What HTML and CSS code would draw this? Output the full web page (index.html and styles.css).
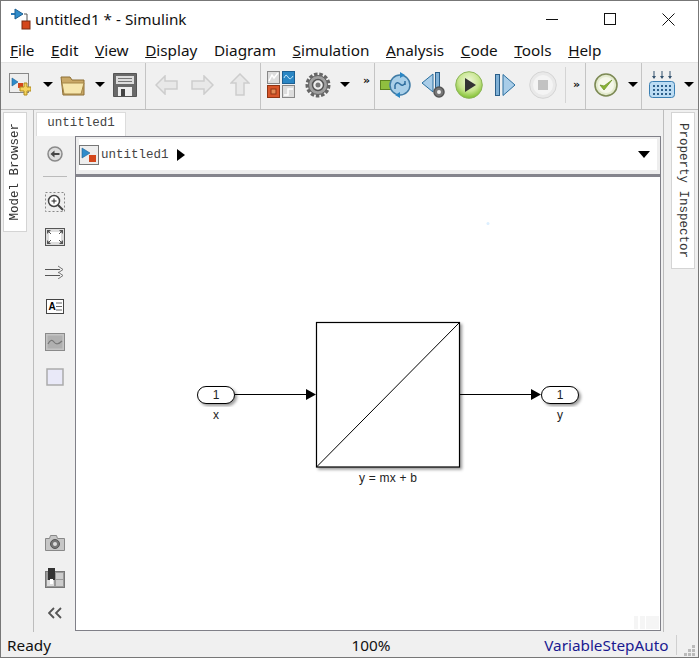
FILE: index.html
```html
<!DOCTYPE html>
<html lang="en">
<head>
    <meta charset="UTF-8">
    <title>untitled1 * - Simulink</title>
    <link rel="stylesheet" href="styles.css">
</head>
<body>
<div class="window">
    <!-- Title bar -->
    <header class="titlebar">
        <svg class="app-icon" width="21" height="22" viewBox="0 0 21 22">
            <path d="M1 6h4" stroke="#2a79b8" stroke-width="2"/>
            <path d="M5 1l8 5-8 5z" fill="#2f8ccb" stroke="#1d5f92"/>
            <path d="M14 6h3v7" fill="none" stroke="#555"/>
            <rect x="12" y="13" width="8" height="8" fill="#d4471c" stroke="#7a2b10"/>
        </svg>
        <span class="title">untitled1 * - Simulink</span>
        <div class="win-controls">
            <svg width="13" height="13" viewBox="0 0 13 13"><path d="M0 6.500h12" stroke="#111"/></svg>
            <svg width="13" height="13" viewBox="0 0 13 13"><rect x="0.500" y="0.500" width="11" height="11" fill="none" stroke="#111"/></svg>
            <svg width="13" height="13" viewBox="0 0 13 13"><path d="M0.500 0.500l12 12M12.500 0.500l-12 12" stroke="#111"/></svg>
        </div>
    </header>

    <!-- Menu -->
    <nav class="menubar">
        <span><u>F</u>ile</span>
        <span><u>E</u>dit</span>
        <span><u>V</u>iew</span>
        <span><u>D</u>isplay</span>
        <span>Dia<u>g</u>ram</span>
        <span><u>S</u>imulation</span>
        <span><u>A</u>nalysis</span>
        <span><u>C</u>ode</span>
        <span><u>T</u>ools</span>
        <span><u>H</u>elp</span>
    </nav>

    <!-- Toolbar -->
    <div class="toolbar">
        <div class="tool-group group-file">
            <svg width="22" height="25" viewBox="0 0 22 25">
                <rect x="0.500" y="1.500" width="19" height="19" fill="#eee" stroke="#888"/>
                <path d="M3 6l6 4-6 4z" fill="#2f8ccb" stroke="#1d5f92" stroke-width="0.600"/>
                <rect x="9" y="11" width="5" height="5" fill="#d4471c"/>
                <path d="M15 11h3v4h4v4h-4v4h-3v-4h-4v-4h4z" fill="#f4d35e" stroke="#b08a1d"/>
            </svg>
            <span class="caret gap-12"></span>
            <svg class="gap-7" width="26" height="22" viewBox="0 0 26 22">
                <path d="M1 3h9l2 3h12v15H3z" fill="#c9a867" stroke="#8d6f35"/>
                <path d="M2 9h22l-3 11H4z" fill="#f6e6ad" stroke="#a58748"/>
            </svg>
            <span class="caret gap-9"></span>
            <svg class="gap-8" width="24" height="24" viewBox="0 0 24 24">
                <path d="M0.500 0.500h23v23h-23z" fill="#6a6a6a" stroke="#555"/>
                <rect x="3" y="3" width="18" height="8" fill="#ddd"/>
                <path d="M5 5.500h14M5 8.500h14" stroke="#777"/>
                <rect x="5" y="14" width="14" height="9" fill="#eee"/>
                <rect x="8" y="16" width="4" height="7" fill="#444"/>
            </svg>
        </div>
        <div class="tool-group group-nav">
            <svg width="23" height="20" viewBox="0 0 23 20"><path d="M1 10l9-9v5h12v8H10v5z" fill="#e8e8e8" stroke="#cdcdcd" stroke-width="1.500"/></svg>
            <svg class="gap-13" width="23" height="20" viewBox="0 0 23 20"><path d="M22 10l-9-9v5H1v8h12v5z" fill="#e8e8e8" stroke="#cdcdcd" stroke-width="1.500"/></svg>
            <svg class="gap-16" width="20" height="23" viewBox="0 0 20 23"><path d="M10 1l9 9h-5v12H6V10H1z" fill="#e8e8e8" stroke="#cdcdcd" stroke-width="1.500"/></svg>
        </div>
        <div class="tool-group group-lib">
            <svg width="29" height="27" viewBox="0 0 29 27">
                <rect x="0.500" y="0.500" width="12" height="12" fill="#ddd" stroke="#888"/>
                <path d="M2 10l3-6 2 3 4-5" fill="none" stroke="#fff" stroke-width="1.500"/>
                <rect x="15.500" y="0.500" width="12" height="12" fill="#2a86c4" stroke="#1d5f92"/>
                <path d="M17 7q2-5 4-1t5-1" fill="none" stroke="#bfe3f7"/>
                <rect x="0.500" y="14.500" width="12" height="12" fill="#d8562a" stroke="#8f3413"/>
                <rect x="4" y="18" width="5" height="5" fill="#e58a55" stroke="#8f3413"/>
                <rect x="15.500" y="14.500" width="12" height="12" fill="#ddd" stroke="#888"/>
                <path d="M17 24h4v-6h5" fill="none" stroke="#fff" stroke-width="1.500"/>
            </svg>
            <svg class="gap-9" width="26" height="26" viewBox="0 0 26 26">
                <circle cx="13" cy="13" r="10" fill="#888" stroke="#666" stroke-width="5" stroke-dasharray="3.200 1.600"/>
                <circle cx="13" cy="13" r="9.500" fill="#a0a0a0" stroke="#666"/>
                <circle cx="13" cy="13" r="5.500" fill="#eee" stroke="#555" stroke-width="1.500"/>
                <circle cx="13" cy="13" r="2.500" fill="#777"/>
            </svg>
            <span class="caret gap-9"></span>
            <span class="more gap-13">»</span>
        </div>
        <div class="tool-group group-run">
            <svg width="31" height="26" viewBox="0 0 31 26">
                <rect x="0.500" y="8.500" width="11" height="9" fill="#8fbf3f" stroke="#5d8420"/>
                <circle cx="20" cy="13" r="10" fill="#a9cfe8" stroke="#3f7ba6" stroke-width="1.500"/>
                <path d="M15 13q2-4 5-1t5-1M25 9v4M15 17l0-4" fill="none" stroke="#2f6f9f" stroke-width="1.500"/>
                <path d="M20 0l5 3-5 3zM20 20l-5 3 5 3z" fill="#2a86c4"/>
            </svg>
            <svg class="gap-10" width="25" height="27" viewBox="0 0 25 27">
                <path d="M12 3v18L1 12z" fill="#a9cde8" stroke="#2a6f9f"/>
                <rect x="14.500" y="1.500" width="4" height="18" fill="#7fb0d6" stroke="#2a5f8a"/>
                <circle cx="18" cy="21" r="5" fill="#777" stroke="#555" stroke-width="1.500"/>
                <circle cx="18" cy="21" r="2" fill="#eee"/>
            </svg>
            <svg class="gap-9" width="28" height="28" viewBox="0 0 28 28">
                <defs>
                    <radialGradient id="playFill" cx="50%" cy="35%" r="65%">
                        <stop offset="0" stop-color="#eef7d8"/>
                        <stop offset="0.600" stop-color="#c7e58e"/>
                        <stop offset="1" stop-color="#7fbf2e"/>
                    </radialGradient>
                </defs>
                <circle cx="14" cy="14" r="13.300" fill="url(#playFill)" stroke="#8cb558"/>
                <path d="M10 7l11 7-11 7z" fill="#333"/>
            </svg>
            <svg class="gap-12" width="21" height="24" viewBox="0 0 21 24">
                <rect x="0.500" y="1.500" width="4" height="21" fill="#7fb0d6" stroke="#2a5f8a"/>
                <path d="M8 1.500v21L20 12z" fill="#a9cde8" stroke="#2a6f9f"/>
            </svg>
            <svg class="gap-13" width="28" height="28" viewBox="0 0 28 28">
                <circle cx="14" cy="14" r="13.300" fill="#e9e9e9" stroke="#d4d4d4"/>
                <circle cx="14" cy="14" r="10" fill="#f4f4f4"/>
                <rect x="9" y="9" width="10" height="10" fill="#c2c2c2"/>
            </svg>
            <span class="thin-sep"></span>
            <span class="more more-low gap-7">»</span>
        </div>
        <div class="tool-group group-check">
            <svg width="24" height="24" viewBox="0 0 24 24">
                <circle cx="12" cy="12" r="11" fill="#e4ebcf" stroke="#7d8a55" stroke-width="1.600"/>
                <circle cx="12" cy="12" r="8" fill="#f5f7ea"/>
                <path d="M6 12l4 5 8-10-8 6z" fill="#8ab534" stroke="#6f9428" stroke-width="0.800"/>
            </svg>
            <span class="caret gap-10"></span>
        </div>
        <div class="tool-group group-grid">
            <svg width="26" height="27" viewBox="0 0 26 27">
                <path d="M5 0v7M13 0v7M21 0v7" stroke="#35536f"/>
                <path d="M3 5l2 3 2-3zM11 5l2 3 2-3zM19 5l2 3 2-3z" fill="#35536f"/>
                <rect x="0.500" y="10.500" width="25" height="16" rx="3" fill="#bcdcf3" stroke="#3a7fb3"/>
                <path d="M4 15h2M8 15h2M12 15h2M16 15h2M20 15h2M4 19h2M8 19h2M12 19h2M16 19h2M20 19h2M4 23h2M8 23h2M12 23h2M16 23h2M20 23h2" stroke="#2d5f8a" stroke-width="2"/>
            </svg>
            <span class="caret gap-9"></span>
        </div>
    </div>

    <!-- Workspace -->
    <div class="workspace">
        <aside class="rail-left">
            <div class="side-tab browser-tab"><span>Model Browser</span></div>
        </aside>

        <div class="center">
            <div class="tabstrip"><div class="doc-tab">untitled1</div></div>
            <div class="center-row">
                <div class="tools">
                    <div class="tool"><svg width="16" height="16" viewBox="0 0 16 16">
                        <circle cx="8" cy="8" r="7" fill="#ddd" stroke="#8a8a8a" stroke-width="1.500"/>
                        <path d="M3.500 8l4-3.500V7h5v2h-5v2.500z" fill="#444"/>
                    </svg></div>
                    <div class="tool-sep"></div>
                    <div class="tool"><svg width="20" height="20" viewBox="0 0 20 20">
                        <rect x="0.500" y="0.500" width="19" height="19" fill="#eee" stroke="#888" stroke-dasharray="2 2"/>
                        <circle cx="9" cy="9" r="5.500" fill="#fff" stroke="#444" stroke-width="1.500"/>
                        <path d="M6.500 9h5M9 6.500v5" stroke="#222"/>
                        <path d="M13 13l5 5" stroke="#444" stroke-width="2"/>
                    </svg></div>
                    <div class="tool"><svg width="20" height="18" viewBox="0 0 20 18">
                        <rect x="0.500" y="0.500" width="19" height="17" fill="#ddd" stroke="#555"/>
                        <rect x="4" y="4" width="12" height="10" fill="#fff"/>
                        <path d="M2 2h4L2 6zM18 2h-4l4 4zM2 16h4l-4-4zM18 16h-4l4-4z" fill="#555"/>
                        <path d="M6 6L3 3M14 6l3-3M6 12l-3 3M14 12l3 3" stroke="#555"/>
                    </svg></div>
                    <div class="tool"><svg width="19" height="14" viewBox="0 0 19 14">
                        <path d="M0 4.500h15M0 10.500h15" stroke="#555" stroke-width="1.200"/>
                        <path d="M13 1l5 3.500-5 3.500M13 7l5 3.500-5 3.500" fill="none" stroke="#777"/>
                    </svg></div>
                    <div class="tool"><svg width="18" height="15" viewBox="0 0 18 15">
                        <rect x="0.500" y="0.500" width="17" height="14" fill="#fff" stroke="#444"/>
                        <text class="ae-text" x="2.500" y="11">A</text>
                        <path d="M10 4h6M10 7.500h6M10 11h6" stroke="#666"/>
                    </svg></div>
                    <div class="tool"><svg width="20" height="18" viewBox="0 0 20 18">
                        <rect x="0.500" y="0.500" width="19" height="17" fill="#c4c4c4" stroke="#8a8a8a"/>
                        <rect x="2.500" y="2.500" width="15" height="13" fill="#b0b0b0"/>
                        <path d="M3 11q3-6 6-2t8-1" fill="none" stroke="#777" stroke-width="1.200"/>
                    </svg></div>
                    <div class="tool"><svg width="18" height="18" viewBox="0 0 18 18">
                        <rect x="1" y="1" width="16" height="16" fill="#e9e9f8" stroke="#aaa" stroke-width="1.500"/>
                    </svg></div>
                    <div class="tools-spacer"></div>
                    <div class="tool"><svg width="20" height="16" viewBox="0 0 20 16">
                        <path d="M0.500 3.500h4l1-3h6l1 3h7v12h-19z" fill="#c6c6c6" stroke="#888"/>
                        <circle cx="10" cy="9" r="4.500" fill="#777" stroke="#555"/>
                        <circle cx="10" cy="9" r="2" fill="#ddd"/>
                    </svg></div>
                    <div class="tool"><svg width="20" height="20" viewBox="0 0 20 20">
                        <rect x="0.500" y="3.500" width="19" height="16" fill="#999" stroke="#777"/>
                        <rect x="11" y="5" width="7" height="6" fill="#ccc"/>
                        <rect x="11" y="12" width="7" height="6" fill="#ccc"/>
                        <rect x="2" y="12" width="7" height="6" fill="#ddd"/>
                        <rect x="3" y="0" width="7" height="12" fill="#333"/>
                        <rect x="5" y="11" width="3" height="5" fill="#fff"/>
                    </svg></div>
                    <div class="tool"><svg width="14" height="12" viewBox="0 0 14 12">
                        <path d="M6 1L1 6l5 5M13 1L8 6l5 5" fill="none" stroke="#555" stroke-width="1.800"/>
                    </svg></div>
                </div>

                <div class="editor">
                    <div class="breadcrumb">
                        <div class="crumb-inner">
                            <svg class="crumb-icon" width="20" height="20" viewBox="0 0 20 20">
                                <rect x="0.500" y="0.500" width="19" height="19" fill="#eee" stroke="#777"/>
                                <path d="M3 3l8 5-8 5z" fill="#2f8ccb" stroke="#1d5f92" stroke-width="0.600"/>
                                <rect x="10" y="10" width="7" height="7" fill="#d4471c"/>
                            </svg>
                            <span class="crumb-name">untitled1</span>
                            <span class="crumb-arrow"></span>
                            <span class="crumb-drop"></span>
                        </div>
                    </div>
                    <div class="canvas">
                        <svg class="diagram" width="584" height="453" viewBox="76 177 584 453">
                            <defs>
                                <filter id="soft" x="-10%" y="-10%" width="125%" height="130%">
                                    <feDropShadow dx="2" dy="2" stdDeviation="1.500" flood-color="#000" flood-opacity="0.400"/>
                                </filter>
                            </defs>
                            <circle cx="488" cy="223.500" r="1.500" fill="#dcefff"/>

                            <rect class="port" x="197.500" y="386.500" width="37" height="17" rx="8.500"/>
                            <text class="port-num" x="216" y="399">1</text>
                            <text class="label" x="216" y="419">x</text>

                            <path d="M235 394.500h72" stroke="#000"/>
                            <path d="M306 389l10 5.500-10 5.500z" fill="#000"/>

                            <rect class="block" x="316.500" y="322.500" width="143" height="144.500"/>
                            <path d="M316.500 467L459.500 322.500" stroke="#000"/>
                            <text class="label label-wide" x="388" y="482">y = mx + b</text>

                            <path d="M460 394.500h72" stroke="#000"/>
                            <path d="M531 389l10 5.500-10 5.500z" fill="#000"/>

                            <rect class="port" x="541.500" y="386.500" width="37" height="17" rx="8.500"/>
                            <text class="port-num" x="560" y="399">1</text>
                            <text class="label" x="560" y="419">y</text>

                            <rect x="634" y="616" width="4" height="13" fill="#f5f5f5"/>
                            <rect x="640" y="616" width="5" height="13" fill="#f5f5f5"/>
                            <rect x="646" y="616" width="13" height="13" fill="#f5f5f5"/>
                        </svg>
                    </div>
                </div>
            </div>
        </div>

        <aside class="rail-right">
            <div class="side-tab inspector-tab"><span>Property Inspector</span></div>
        </aside>
    </div>

    <!-- Status bar -->
    <footer class="statusbar">
        <span class="st-ready">Ready</span>
        <span class="st-zoom">100%</span>
        <span class="st-solver">VariableStepAuto</span>
        <span class="st-sep"></span>
        <svg class="grip" width="11" height="11" viewBox="0 0 11 11">
            <path d="M8 0h3v3H8zM4 4h3v3H4zM8 4h3v3H8zM0 8h3v3H0zM4 8h3v3H4zM8 8h3v3H8z" fill="#bbb"/>
        </svg>
    </footer>
</div>
</body>
</html>
```

FILE: styles.css
```css
* {
    box-sizing: border-box;
    margin: 0;
    padding: 0;
}

body {
    width: 699px;
    height: 658px;
    overflow: hidden;
    background-color: #fff;
    font-family: "Noto Sans", "Open Sans", sans-serif;
    color: #111;
}

svg {
    display: block;
    flex: none;
}

.window {
    display: flex;
    flex-direction: column;
    width: 699px;
    height: 658px;
    border: 1px solid #777;
    background-color: #f0f0f0;
}

/* Title bar */
.titlebar {
    display: flex;
    align-items: center;
    height: 37px;
    padding: 0 0 1px 9px;
    background-color: #fff;
}

.title {
    margin-left: 4px;
    font-size: 15.3px;
}

.win-controls {
    display: flex;
    gap: 45px;
    margin-left: auto;
    padding-right: 23px;
}

/* Menu */
.menubar {
    display: flex;
    gap: 16.6px;
    align-items: center;
    height: 24px;
    padding-left: 9px;
    background-color: #fff;
    font-size: 15.3px;
}

/* Toolbar */
.toolbar {
    display: flex;
    height: 48px;
    border-top: 1px solid #e4e4e4;
    border-bottom: 1px solid #bdbdbd;
    background-color: #f0f0f0;
}

.tool-group {
    display: flex;
    align-items: center;
    padding-bottom: 3px;
    border-right: 1px solid #c4c4c4;
}

.group-file { width: 145px; padding-left: 8px; }
.group-nav { width: 115px; padding-left: 9px; }
.group-lib { width: 114px; padding-left: 6px; }
.group-run { width: 211px; padding-left: 5px; }
.group-check { width: 56px; padding-left: 8px; }
.group-grid { flex: 1; padding-left: 7px; border-right: 0; }

.gap-7 { margin-left: 7px; }
.gap-8 { margin-left: 8px; }
.gap-9 { margin-left: 9px; }
.gap-10 { margin-left: 10px; }
.gap-12 { margin-left: 12px; }
.gap-13 { margin-left: 13px; }
.gap-16 { margin-left: 16px; }

.caret {
    flex: none;
    width: 0;
    height: 0;
    border-left: 5px solid transparent;
    border-right: 5px solid transparent;
    border-top: 5px solid #000;
}

.more {
    flex: none;
    margin-bottom: 8px;
    font-family: "DejaVu Sans", sans-serif;
    font-size: 11px;
    font-weight: bold;
    line-height: 1;
}

.more-low {
    margin-bottom: 0;
}

.thin-sep {
    flex: none;
    width: 1px;
    height: 36px;
    margin-left: 8px;
    background-color: #d4d4d4;
}

/* Workspace */
.workspace {
    display: flex;
    flex: 1;
    min-height: 0;
}

.rail-left {
    flex: none;
    width: 33px;
    padding: 2px 0 0 2px;
    border-right: 1px solid #bdbdbd;
}

.rail-right {
    flex: none;
    width: 35px;
    padding: 2px 0 0 7px;
    border-left: 1px solid #bdbdbd;
}

.side-tab {
    display: flex;
    align-items: center;
    justify-content: center;
    width: 24px;
    border: 1px solid #d4d4d4;
    background-color: #fff;
    font-family: "Liberation Mono", monospace;
    font-size: 12.5px;
    color: #333;
}

.side-tab span {
    writing-mode: vertical-rl;
}

.browser-tab {
    height: 120px;
}

.browser-tab span {
    transform: rotate(180deg);
}

.inspector-tab {
    height: 157px;
}

.center {
    display: flex;
    flex: 1;
    flex-direction: column;
    min-width: 0;
}

.tabstrip {
    display: flex;
    flex: none;
    height: 26px;
    padding: 2px 0 0 2px;
}

.doc-tab {
    width: 90px;
    height: 24px;
    padding-top: 3px;
    border: 1px solid #dcdcdc;
    border-bottom: 0;
    background-color: #fff;
    text-align: center;
    font-family: "Liberation Mono", monospace;
    font-size: 12.5px;
    color: #444;
}

.center-row {
    display: flex;
    flex: 1;
    min-height: 0;
}

/* Side tools */
.tools {
    display: flex;
    flex: none;
    flex-direction: column;
    align-items: center;
    width: 41px;
    padding-bottom: 2px;
}

.tool {
    display: flex;
    flex: none;
    align-items: center;
    justify-content: center;
    width: 100%;
    height: 35px;
}

.tool-sep {
    flex: none;
    width: 24px;
    height: 1px;
    margin: 5px 0 7px;
    background-color: #bbb;
}

.tools-spacer {
    flex: 1;
}

.ae-text {
    font-family: "Liberation Sans", sans-serif;
    font-size: 10px;
    font-weight: bold;
}

/* Editor */
.editor {
    display: flex;
    flex: none;
    flex-direction: column;
    width: 586px;
    height: 495px;
    border: 1px solid #808088;
    background-color: #fff;
}

.breadcrumb {
    flex: none;
    height: 40px;
    padding: 2px 3px 4px;
    border-bottom: 3px solid #85858d;
    background-color: #eee;
}

.crumb-inner {
    display: flex;
    align-items: center;
    height: 100%;
    padding: 0 7px 0 0;
    background-color: #fff;
}

.crumb-name {
    margin-left: 2px;
    font-family: "Liberation Mono", monospace;
    font-size: 12.5px;
    color: #444;
}

.crumb-arrow {
    width: 0;
    height: 0;
    margin-left: 8px;
    border-top: 6px solid transparent;
    border-bottom: 6px solid transparent;
    border-left: 8px solid #000;
}

.crumb-drop {
    width: 0;
    height: 0;
    margin-left: auto;
    border-left: 6px solid transparent;
    border-right: 6px solid transparent;
    border-top: 7px solid #000;
}

.canvas {
    flex: 1;
    min-height: 0;
}

.port {
    fill: #fff;
    stroke: #000;
    filter: url(#soft);
}

.block {
    fill: #fff;
    stroke: #000;
    stroke-width: 1.200;
    filter: url(#soft);
}

.port-num,
.label {
    font-family: "Liberation Sans", sans-serif;
    font-size: 12px;
    text-anchor: middle;
    fill: #222;
}

.label-wide {
    letter-spacing: 0.200px;
}

/* Status bar */
.statusbar {
    display: flex;
    flex: none;
    align-items: center;
    height: 25px;
    padding: 0 3px 0 6px;
    font-size: 15.3px;
}

.st-ready {
    width: 345px;
}

.st-zoom {
    width: 193px;
}

.st-solver {
    width: 132px;
    color: #1a1a90;
}

.st-sep {
    flex: none;
    width: 1px;
    height: 20px;
    background-color: #d0d0d0;
}

.grip {
    margin-left: 7px;
    align-self: flex-end;
    margin-bottom: 1px;
}
```
